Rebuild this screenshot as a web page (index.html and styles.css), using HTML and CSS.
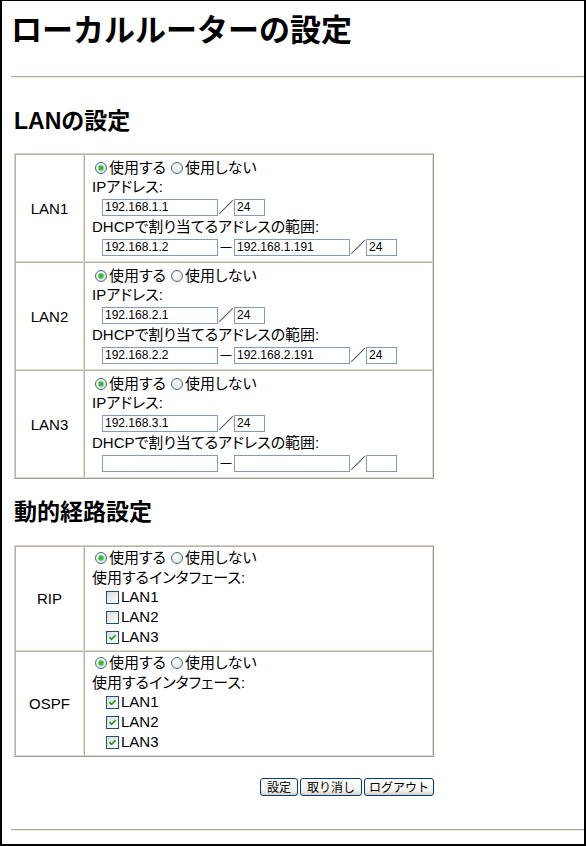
FILE: index.html
```html
<!DOCTYPE html>
<html lang="ja">
<head>
<meta charset="utf-8">
<title>ローカルルーターの設定</title>
<link rel="stylesheet" href="styles.css">
</head>
<body>
<div class="frame">
  <h1 class="title">ローカルルーターの設定</h1>
  <hr class="rule">

  <h2 class="section">LANの設定</h2>
  <table class="grid">
    <tr>
      <td class="label-cell">LAN1</td>
      <td class="body-cell">
        <div class="line choice"><input type="radio" class="radio" name="lan1" checked><span>使用する</span><input type="radio" class="radio radio-next" name="lan1"><span>使用しない</span></div>
        <div class="line">IPアドレス:</div>
        <div class="line fields"><input class="text-field ip" value="192.168.1.1"><span class="sep">／</span><input class="text-field mask" value="24"></div>
        <div class="line">DHCPで割り当てるアドレスの範囲:</div>
        <div class="line fields"><input class="text-field ip" value="192.168.1.2"><span class="sep">－</span><input class="text-field ip" value="192.168.1.191"><span class="sep">／</span><input class="text-field mask" value="24"></div>
      </td>
    </tr>
    <tr>
      <td class="label-cell">LAN2</td>
      <td class="body-cell">
        <div class="line choice"><input type="radio" class="radio" name="lan2" checked><span>使用する</span><input type="radio" class="radio radio-next" name="lan2"><span>使用しない</span></div>
        <div class="line">IPアドレス:</div>
        <div class="line fields"><input class="text-field ip" value="192.168.2.1"><span class="sep">／</span><input class="text-field mask" value="24"></div>
        <div class="line">DHCPで割り当てるアドレスの範囲:</div>
        <div class="line fields"><input class="text-field ip" value="192.168.2.2"><span class="sep">－</span><input class="text-field ip" value="192.168.2.191"><span class="sep">／</span><input class="text-field mask" value="24"></div>
      </td>
    </tr>
    <tr>
      <td class="label-cell">LAN3</td>
      <td class="body-cell">
        <div class="line choice"><input type="radio" class="radio" name="lan3" checked><span>使用する</span><input type="radio" class="radio radio-next" name="lan3"><span>使用しない</span></div>
        <div class="line">IPアドレス:</div>
        <div class="line fields"><input class="text-field ip" value="192.168.3.1"><span class="sep">／</span><input class="text-field mask" value="24"></div>
        <div class="line">DHCPで割り当てるアドレスの範囲:</div>
        <div class="line fields"><input class="text-field ip" value=""><span class="sep">－</span><input class="text-field ip" value=""><span class="sep">／</span><input class="text-field mask" value=""></div>
      </td>
    </tr>
  </table>

  <h2 class="section section-second">動的経路設定</h2>
  <table class="grid grid-second">
    <tr>
      <td class="label-cell">RIP</td>
      <td class="body-cell body-cell-routing">
        <div class="line choice"><input type="radio" class="radio" name="rip" checked><span>使用する</span><input type="radio" class="radio radio-next" name="rip"><span>使用しない</span></div>
        <div class="line line-label">使用するインタフェース:</div>
        <label class="line check-row"><input type="checkbox" class="check"><span>LAN1</span></label>
        <label class="line check-row"><input type="checkbox" class="check"><span>LAN2</span></label>
        <label class="line check-row"><input type="checkbox" class="check" checked><span>LAN3</span></label>
      </td>
    </tr>
    <tr>
      <td class="label-cell">OSPF</td>
      <td class="body-cell body-cell-routing">
        <div class="line choice"><input type="radio" class="radio" name="ospf" checked><span>使用する</span><input type="radio" class="radio radio-next" name="ospf"><span>使用しない</span></div>
        <div class="line line-label">使用するインタフェース:</div>
        <label class="line check-row"><input type="checkbox" class="check" checked><span>LAN1</span></label>
        <label class="line check-row"><input type="checkbox" class="check" checked><span>LAN2</span></label>
        <label class="line check-row"><input type="checkbox" class="check" checked><span>LAN3</span></label>
      </td>
    </tr>
  </table>

  <div class="actions">
    <button class="btn btn-set">設定</button>
    <button class="btn btn-cancel">取り消し</button>
    <button class="btn btn-logout">ログアウト</button>
  </div>
  <hr class="rule rule-bottom">
</div>
</body>
</html>
```

FILE: styles.css
```css
html, body {
  margin: 0;
  padding: 0;
  background: #fff;
}

body {
  font-family: "Liberation Sans", "Noto Sans CJK JP", sans-serif;
  color: #000;
}

.frame {
  width: 586px;
  height: 846px;
  box-sizing: border-box;
  border: solid #000;
  border-width: 1px 2px 2px 2px;
  padding-left: 9px;
  overflow: hidden;
}

.title {
  margin: 0;
  padding-top: 10px;
  font-size: 31px;
  line-height: 40px;
  font-weight: bold;
  white-space: nowrap;
}

.rule {
  margin: 25px 0 0;
  height: 0;
  border: 0;
  border-top: 1px solid #aca899;
  border-bottom: 1px solid #f1efe2;
}

.rule-bottom {
  margin-top: 33px;
}

.section {
  margin: 28px 0 0 3px;
  font-size: 23px;
  line-height: 30px;
  font-weight: bold;
}

.section-second {
  margin-top: 18px;
}

.grid {
  margin: 17px 0 0 3px;
  width: 420px;
  border-collapse: separate;
  border-spacing: 0;
  border: 1px solid;
  border-color: #d4d0c8 #9d9b90 #9d9b90 #d4d0c8;
}

.grid-second {
  margin-top: 18px;
}

.grid td {
  border: 1px solid;
  border-color: #b8b4a4 #dedbd0 #dedbd0 #b8b4a4;
  padding: 0;
  font-size: 15px;
}

.label-cell {
  width: 67px;
  text-align: center;
  vertical-align: middle;
}

.body-cell {
  padding: 3px 0 3px 7px !important;
  vertical-align: top;
}

.body-cell-routing {
  padding: 1px 0 3px 7px !important;
}

.line {
  display: flex;
  align-items: center;
  height: 18px;
  line-height: 18px;
  white-space: nowrap;
  font-feature-settings: "palt";
}

.choice {
  height: 20px;
}

.line-label {
  height: 19px;
}

.fields {
  height: 22px;
  padding-left: 10px;
}

.check-row {
  height: 20px;
  padding-left: 14px;
}

.radio {
  appearance: none;
  -webkit-appearance: none;
  box-sizing: border-box;
  width: 12px;
  height: 12px;
  margin: 0 2px 0 3px;
  border: 1px solid #3f6a94;
  border-radius: 50%;
  background: radial-gradient(circle at 35% 35%, #ffffff, #dcdcd7);
}

.radio:checked {
  background: radial-gradient(circle, #2fb02f 0, #3cbf3c 2px, #a7dca7 3px, rgba(255,255,255,0) 3.6px),
              radial-gradient(circle at 35% 35%, #ffffff, #dcdcd7);
}

.radio-next {
  margin-left: 5px;
}

.check {
  appearance: none;
  -webkit-appearance: none;
  box-sizing: border-box;
  width: 13px;
  height: 13px;
  margin: 0 2px 0 0;
  border: 1px solid #1c5180;
  background: linear-gradient(135deg, #dcdcd7, #ffffff);
}

.check:checked {
  background-image: url("data:image/svg+xml,%3Csvg xmlns='http://www.w3.org/2000/svg' viewBox='0 0 11 11'%3E%3Cpath d='M2.5 5.2 L4.5 7.3 L8.6 3.2' fill='none' stroke='%2321a121' stroke-width='1.8'/%3E%3C/svg%3E"),
                    linear-gradient(135deg, #dcdcd7, #ffffff);
  background-size: 11px 11px, auto;
  background-repeat: no-repeat;
}

.text-field {
  box-sizing: border-box;
  height: 17px;
  margin: 0;
  padding: 0 2px;
  border: 1px solid #7f9db9;
  font: 12px "Liberation Sans", sans-serif;
  color: #000;
  background: #fff;
}

.ip {
  width: 116px;
}

.mask {
  width: 31px;
}

.sep {
  display: inline-block;
  width: 16px;
  text-align: center;
  font-size: 15px;
  font-family: "Noto Sans CJK JP", sans-serif;
}

.actions {
  display: flex;
  justify-content: flex-end;
  gap: 2px;
  width: 420px;
  margin: 21px 0 0 3px;
}

.btn {
  box-sizing: border-box;
  height: 18px;
  margin: 0;
  padding: 0;
  border: 1px solid #003c74;
  border-radius: 3px;
  background: linear-gradient(#ffffff, #f4f4f0 70%, #d6d0c5);
  font: 12px "Noto Sans CJK JP", sans-serif;
  line-height: 16px;
  color: #000;
}

.btn-set {
  width: 38px;
}

.btn-cancel {
  width: 62px;
}

.btn-logout {
  width: 70px;
}
```
